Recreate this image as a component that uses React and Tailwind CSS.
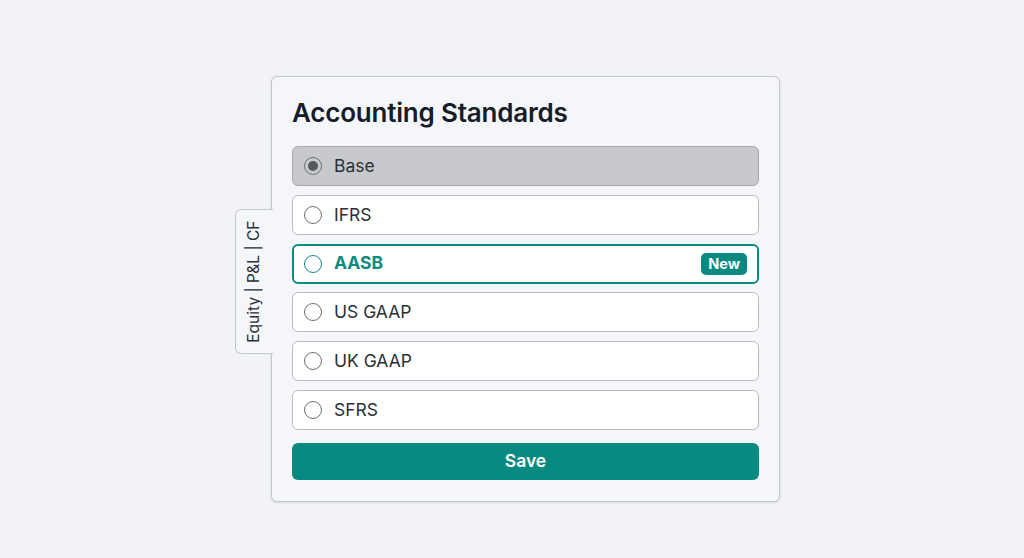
import { useState } from 'react'

const options = [
  { id: 'base', label: 'Base' },
  { id: 'ifrs', label: 'IFRS' },
  { id: 'aasb', label: 'AASB', isNew: true },
  { id: 'usgaap', label: 'US GAAP' },
  { id: 'ukgaap', label: 'UK GAAP' },
  { id: 'sfrs', label: 'SFRS' },
]

function Radio({ checked, accent }) {
  return (
    <span
      className={`w-[18px] h-[18px] rounded-full border-[1.5px] flex items-center justify-center shrink-0 ${
        accent ? 'border-[#0f8a7e]' : 'border-[#6b6f76]'
      }`}
    >
      {checked && <span className="w-[10px] h-[10px] rounded-full bg-[#55585e]" />}
    </span>
  )
}

function Option({ option, selected, highlighted, onSelect }) {
  let cls = 'bg-white border border-[#b9bcc2] text-[#2b2f36] px-[11px]'
  if (selected) cls = 'bg-[#c8c9cd] border border-[#a7a9ae] text-[#2b2f36] px-[11px]'
  if (highlighted) cls = 'bg-white border-2 border-[#0f8a7e] text-[#0f8a7e] font-bold px-[10px]'

  return (
    <button
      onClick={() => onSelect(option.id)}
      className={`h-10 w-full rounded-md flex items-center gap-3 text-[17.5px] text-left ${cls}`}
    >
      <Radio checked={selected} accent={highlighted} />
      <span className="flex-1">{option.label}</span>
      {option.isNew && (
        <span className="bg-[#0a8a7f] text-white text-[14.5px] font-bold rounded-[5px] px-[7px] h-[22px] flex items-center">
          New
        </span>
      )}
    </button>
  )
}

export default function App() {
  const [selected, setSelected] = useState('base')

  return (
    <div
      className="w-[1024px] h-[558px] bg-[#f1f3f6] flex pl-[271px] pt-[76px]"
      style={{ fontFamily: 'Inter, "Noto Sans", sans-serif' }}
    >
      <div className="relative w-[509px] h-[426px] bg-[#f4f6f9] border border-[#c3c6cc] rounded-md shadow-sm px-5 pt-[20px]">
        {/* Side tab */}
        <div className="absolute left-[-37px] top-[132px] w-[38px] h-[145px] bg-[#f4f6f9] border border-r-0 border-[#c3c6cc] rounded-l-md flex items-center justify-center">
          <span className="-rotate-90 whitespace-nowrap text-[15.5px] text-[#2b2f36]">Equity | P&amp;L | CF</span>
        </div>

        <h2 className="text-[26px] leading-8 font-semibold text-[#161c28] tracking-[-0.2px]">
          Accounting Standards
        </h2>

        <div className="mt-[17px] flex flex-col gap-[8.8px]">
          {options.map((o) => (
            <Option
              key={o.id}
              option={o}
              selected={selected === o.id}
              highlighted={o.id === 'aasb'}
              onSelect={setSelected}
            />
          ))}
        </div>

        <button className="mt-[13px] w-full h-[37px] rounded-md bg-[#098a80] text-white text-[17.5px] font-semibold">
          Save
        </button>
      </div>
    </div>
  )
}
